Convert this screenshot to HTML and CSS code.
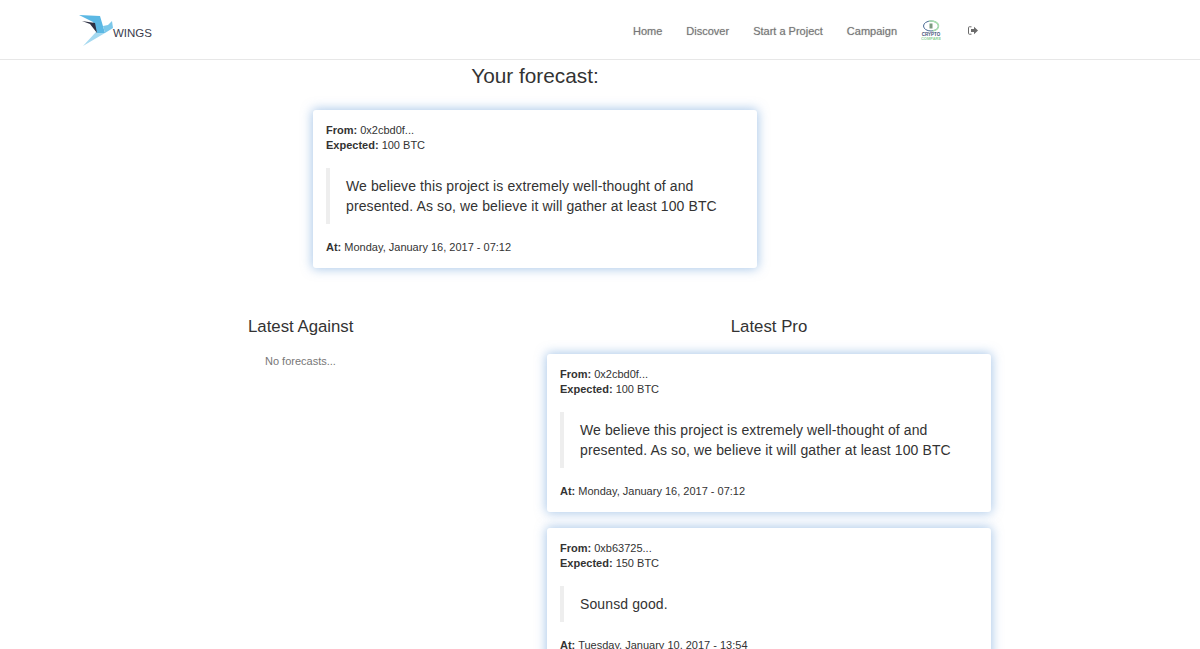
FILE: index.html
```html
<!DOCTYPE html>
<html lang="en">
<head>
<meta charset="utf-8">
<title>Wings</title>
<link rel="stylesheet" href="styles.css">
</head>
<body>
<nav class="nav">
  <a class="brand">
    <svg class="logo" width="36" height="33" viewBox="0 0 36 33">
      <polygon points="4,32 17,18 26,19" fill="#a5d9f0"/>
      <polygon points="0,1 21,2 26,19 18,19 14,8" fill="#5bb8e4"/>
      <polygon points="3,7 16,9 18,19 11,10" fill="#2e3144"/>
      <polygon points="24,12 29,11 33,7 34,14 26,19" fill="#7cc8ea"/>
    </svg>
    <span class="brand-text">WINGS</span>
  </a>
  <ul class="menu">
    <li>Home</li>
    <li>Discover</li>
    <li>Start a Project</li>
    <li>Campaign</li>
    <li class="menu-icon">
      <svg width="20" height="22" viewBox="0 0 20 22">
        <ellipse cx="10" cy="6" rx="7.500" ry="5" fill="none" stroke="#4a6b94" stroke-width="1"/>
        <path d="M8 1.200A7.500 5 0 0 1 17.500 6 7.500 5 0 0 1 12 10.800" fill="none" stroke="#a9dfae" stroke-width="1.500"/>
        <rect x="8.500" y="3.500" width="3" height="5" fill="#7d9a80"/>
        <text class="crypto-top" x="10" y="16" text-anchor="middle">CRYPTO</text>
        <text class="crypto-bottom" x="10" y="20" text-anchor="middle">COMPARE</text>
      </svg>
    </li>
    <li class="menu-icon exit">
      <svg width="10" height="9" viewBox="0 0 10 9">
        <path d="M3.500 .8H1.200Q.5 .8 .5 1.500V7.500Q.5 8.200 1.200 8.200H3.500" fill="none" stroke="#6b6b6b" stroke-width="1"/>
        <path d="M3 3H6V.8L10 4.500 6 8.200V6H3Z" fill="#6b6b6b"/>
      </svg>
    </li>
  </ul>
</nav>
<main class="page">
  <section class="own">
    <h2 class="own-title">Your forecast:</h2>
    <article class="card">
      <p class="meta"><b>From:</b> 0x2cbd0f...<br><b>Expected:</b> 100 BTC</p>
      <blockquote class="quote">We believe this project is extremely well-thought of and presented. As so, we believe it will gather at least 100 BTC</blockquote>
      <p class="meta"><b>At:</b> Monday, January 16, 2017 - 07:12</p>
    </article>
  </section>
  <section class="columns">
    <div class="col-against">
      <h3 class="col-title">Latest Against</h3>
      <p class="empty">No forecasts...</p>
    </div>
    <div class="col-pro">
      <h3 class="col-title centered">Latest Pro</h3>
      <article class="card">
        <p class="meta"><b>From:</b> 0x2cbd0f...<br><b>Expected:</b> 100 BTC</p>
        <blockquote class="quote">We believe this project is extremely well-thought of and presented. As so, we believe it will gather at least 100 BTC</blockquote>
        <p class="meta"><b>At:</b> Monday, January 16, 2017 - 07:12</p>
      </article>
      <article class="card">
        <p class="meta"><b>From:</b> 0xb63725...<br><b>Expected:</b> 150 BTC</p>
        <blockquote class="quote">Sounsd good.</blockquote>
        <p class="meta"><b>At:</b> Tuesday, January 10, 2017 - 13:54</p>
      </article>
    </div>
  </section>
</main>
</body>
</html>
```
FILE: styles.css
```css
* { box-sizing: border-box; }
body {
  margin: 0;
  background: #fff;
  color: #333;
  font-family: "Liberation Sans", Arial, sans-serif;
  font-size: 14px;
  line-height: 20px;
}
.nav {
  height: 60px;
  border-bottom: 1px solid #e7e7e7;
  padding: 0 222px 0 79px;
  display: flex;
  justify-content: space-between;
  align-items: center;
}
.brand { display: flex; align-items: flex-start; padding-top: 1px; }
.logo { display: block; }
.brand-text {
  font-size: 11.500px;
  line-height: 14px;
  color: #3a3c4c;
  margin: 12px 0 0 -2px;
}
.menu {
  list-style: none;
  margin: 0;
  padding: 2px 0 0;
  display: flex;
  align-items: center;
  gap: 24px;
  font-size: 11px;
  font-weight: 400;
  color: #777;
  text-shadow: 0 0 1px rgba(119, 119, 119, .55);
}
.menu-icon { display: flex; align-items: center; text-shadow: none; }
.exit { margin-left: 3px; }
.crypto-top { font-size: 4.500px; font-weight: 700; fill: #3d5475; }
.crypto-bottom { font-size: 4px; font-weight: 700; fill: #8fd29a; }
.page { display: flex; flex-direction: column; }
.own { margin-left: 313px; width: 444px; }
.own-title {
  margin: 4px 0 22px;
  font-size: 20.800px;
  font-weight: 400;
  line-height: 24px;
  text-align: center;
  color: #333;
}
.card {
  width: 444px;
  padding: 13px;
  background: #fff;
  border-radius: 3px;
  box-shadow: 0 0 11px 1px rgba(100, 155, 215, .55);
  margin-bottom: 16px;
}
.meta {
  margin: 0;
  font-size: 11px;
  line-height: 15px;
  color: #333;
}
.meta b { font-weight: 700; }
.quote {
  margin: 15px 0 16px;
  padding: 8px 16px;
  border-left: 4px solid #eee;
  font-size: 14px;
  line-height: 20px;
  letter-spacing: .11px;
  color: #333;
}
.columns { display: flex; margin-top: 31px; margin-left: 248px; }
.col-against { width: 299px; }
.col-pro { width: 444px; }
.col-title {
  margin: 0;
  font-size: 16.800px;
  font-weight: 400;
  line-height: 24px;
  color: #333;
}
.centered { text-align: center; margin-bottom: 15px; }
.empty {
  margin: 15px 0 0 17px;
  font-size: 11px;
  line-height: 15px;
  color: #777;
}
```
